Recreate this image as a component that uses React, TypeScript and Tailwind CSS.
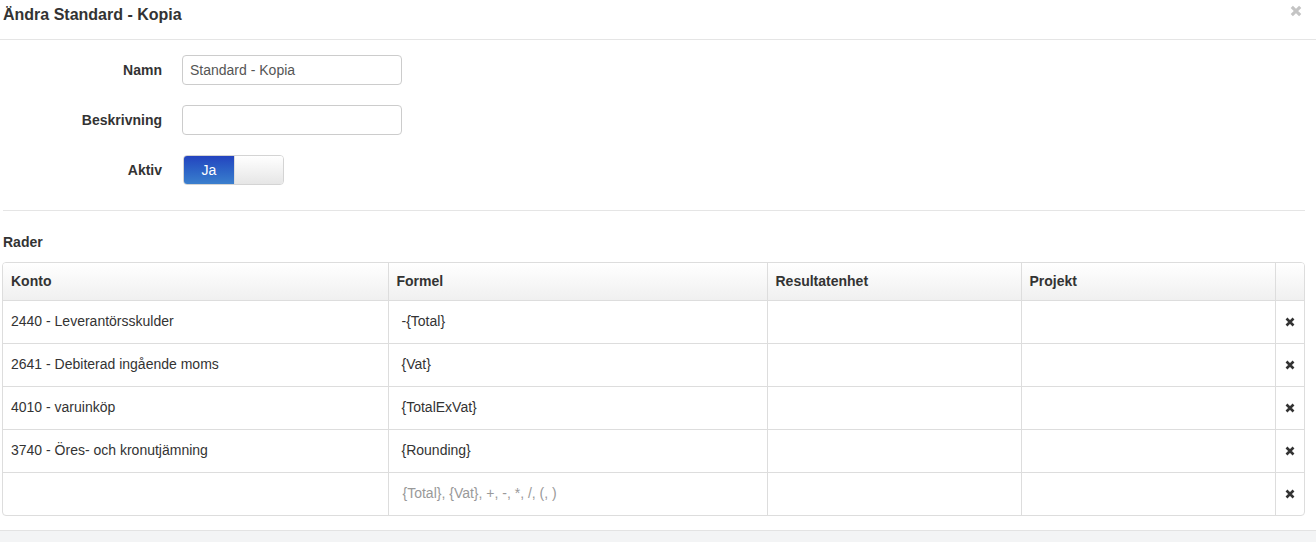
import React from "react";

const rows = [
  { konto: "2440 - Leverantörsskulder", formel: "-{Total}" },
  { konto: "2641 - Debiterad ingående moms", formel: "{Vat}" },
  { konto: "4010 - varuinköp", formel: "{TotalExVat}" },
  { konto: "3740 - Öres- och kronutjämning", formel: "{Rounding}" },
  { konto: "", formel: "" },
];

function XIcon({ className }: { className?: string }) {
  return (
    <svg viewBox="0 0 10 10" className={className} aria-hidden>
      <path d="M1.5 1.5 L8.5 8.5 M8.5 1.5 L1.5 8.5" stroke="currentColor" strokeWidth="2.6" strokeLinecap="butt" />
    </svg>
  );
}

export default function App() {
  return (
    <div
      className="w-[1316px] h-[542px] bg-white text-[#333] overflow-hidden flex flex-col"
      style={{ fontFamily: '"Liberation Sans", Arial, sans-serif' }}
    >
      {/* header */}
      <div className="h-[40px] flex items-start justify-between border-b border-[#e5e5e5] pl-[3px] pr-[14px] shrink-0">
        <h1 className="text-[16px] font-bold leading-[20px] mt-[5px] text-[#333]">Ändra Standard - Kopia</h1>
        <XIcon className="w-[12px] h-[12px] mt-[5px] text-[#c4c4c4]" />
      </div>

      {/* body */}
      <div className="flex-1 flex flex-col pl-[3px] pr-[11px]">
        <div className="flex flex-col gap-[20px] pt-[15px] pb-[25px] border-b border-[#e5e5e5]">
          <div className="flex items-center">
            <label className="w-[159px] text-right text-[14px] font-bold">Namn</label>
            <input
              className="ml-[20px] w-[220px] h-[30px] border border-[#ccc] rounded-[4px] px-[7px] text-[14px] text-[#555] outline-none"
              defaultValue="Standard - Kopia"
              style={{ fontFamily: '"Liberation Sans", Arial, sans-serif' }}
            />
          </div>
          <div className="flex items-center">
            <label className="w-[159px] text-right text-[14px] font-bold">Beskrivning</label>
            <input className="ml-[20px] w-[220px] h-[30px] border border-[#ccc] rounded-[4px] px-[7px] text-[14px] outline-none" />
          </div>
          <div className="flex items-center">
            <label className="w-[159px] text-right text-[14px] font-bold">Aktiv</label>
            <div className="ml-[21px] w-[101px] h-[30px] flex rounded-[4px] border border-[#d4d4d4] overflow-hidden">
              <div className="w-[50px] h-full flex items-center justify-center text-white text-[14px] bg-gradient-to-b from-[#2443bf] to-[#3b7fcd]">
                Ja
              </div>
              <div className="flex-1 h-full bg-gradient-to-b from-[#ffffff] to-[#e6e6e6] border-l border-[#ddd]" />
            </div>
          </div>
        </div>

        <div className="text-[14px] font-bold mt-[23px] leading-[16px]">Rader</div>

        <div className="mt-[12px] -ml-[1px] w-[1303px] border border-[#ddd] rounded-[4px] overflow-hidden">
          <table className="w-full border-collapse text-[14px] table-fixed">
            <colgroup>
              <col className="w-[385px]" />
              <col className="w-[379px]" />
              <col className="w-[254px]" />
              <col className="w-[254px]" />
              <col />
            </colgroup>
            <thead>
              <tr className="h-[37px] bg-gradient-to-b from-[#ffffff] to-[#f0f0f0]">
                <th className="text-left font-bold px-[8px] border-r border-b border-[#ddd]">Konto</th>
                <th className="text-left font-bold px-[8px] border-r border-b border-[#ddd]">Formel</th>
                <th className="text-left font-bold px-[8px] border-r border-b border-[#ddd]">Resultatenhet</th>
                <th className="text-left font-bold px-[8px] border-r border-b border-[#ddd]">Projekt</th>
                <th className="border-b border-[#ddd]"></th>
              </tr>
            </thead>
            <tbody>
              {rows.map((r, i) => {
                const last = i === rows.length - 1;
                const b = last ? "" : " border-b";
                return (
                  <tr key={i} className="h-[43px]">
                    <td className={"px-[8px] border-r border-[#ddd]" + b}>{r.konto}</td>
                    <td className={"pl-[13px] pr-[8px] border-r border-[#ddd]" + b}>
                      {r.formel ? (
                        <span>{r.formel}</span>
                      ) : (
                        <span className="text-[#999] pl-[1px]">{"{Total}, {Vat}, +, -, *, /, (, )"}</span>
                      )}
                    </td>
                    <td className={"border-r border-[#ddd]" + b}></td>
                    <td className={"border-r border-[#ddd]" + b}></td>
                    <td className={"border-[#ddd]" + b}>
                      <div className="flex justify-center">
                        <XIcon className="w-[10px] h-[10px] text-[#333]" />
                      </div>
                    </td>
                  </tr>
                );
              })}
            </tbody>
          </table>
        </div>
      </div>

      <div className="h-[12px] shrink-0 border-t border-[#e3e3e3] bg-[#f3f4f5]" />
    </div>
  );
}
